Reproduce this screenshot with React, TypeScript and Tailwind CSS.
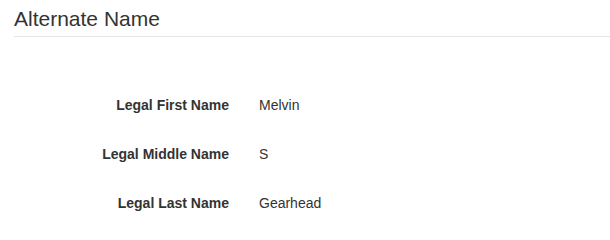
import React from 'react';

const rows = [
  { label: 'Legal First Name', value: 'Melvin' },
  { label: 'Legal Middle Name', value: 'S' },
  { label: 'Legal Last Name', value: 'Gearhead' },
];

const App: React.FC = () => {
  return (
    <div className="bg-white text-[#333] font-['Liberation_Sans',Arial,sans-serif] min-h-[224px]">
      <div className="pl-[14px] pt-[7px]">
        <h3 className="text-[21px] leading-[23px] pb-[6px] border-b border-[#e5e5e5]">Alternate Name</h3>
      </div>
      <div className="flex flex-col gap-[29px] pt-[58px]">
        {rows.map((row) => (
          <div key={row.label} className="flex text-[14px] leading-[20px]">
            <div className="w-[229px] text-right font-bold">{row.label}</div>
            <div className="ml-[30px]">{row.value}</div>
          </div>
        ))}
      </div>
    </div>
  );
};

export default App;
